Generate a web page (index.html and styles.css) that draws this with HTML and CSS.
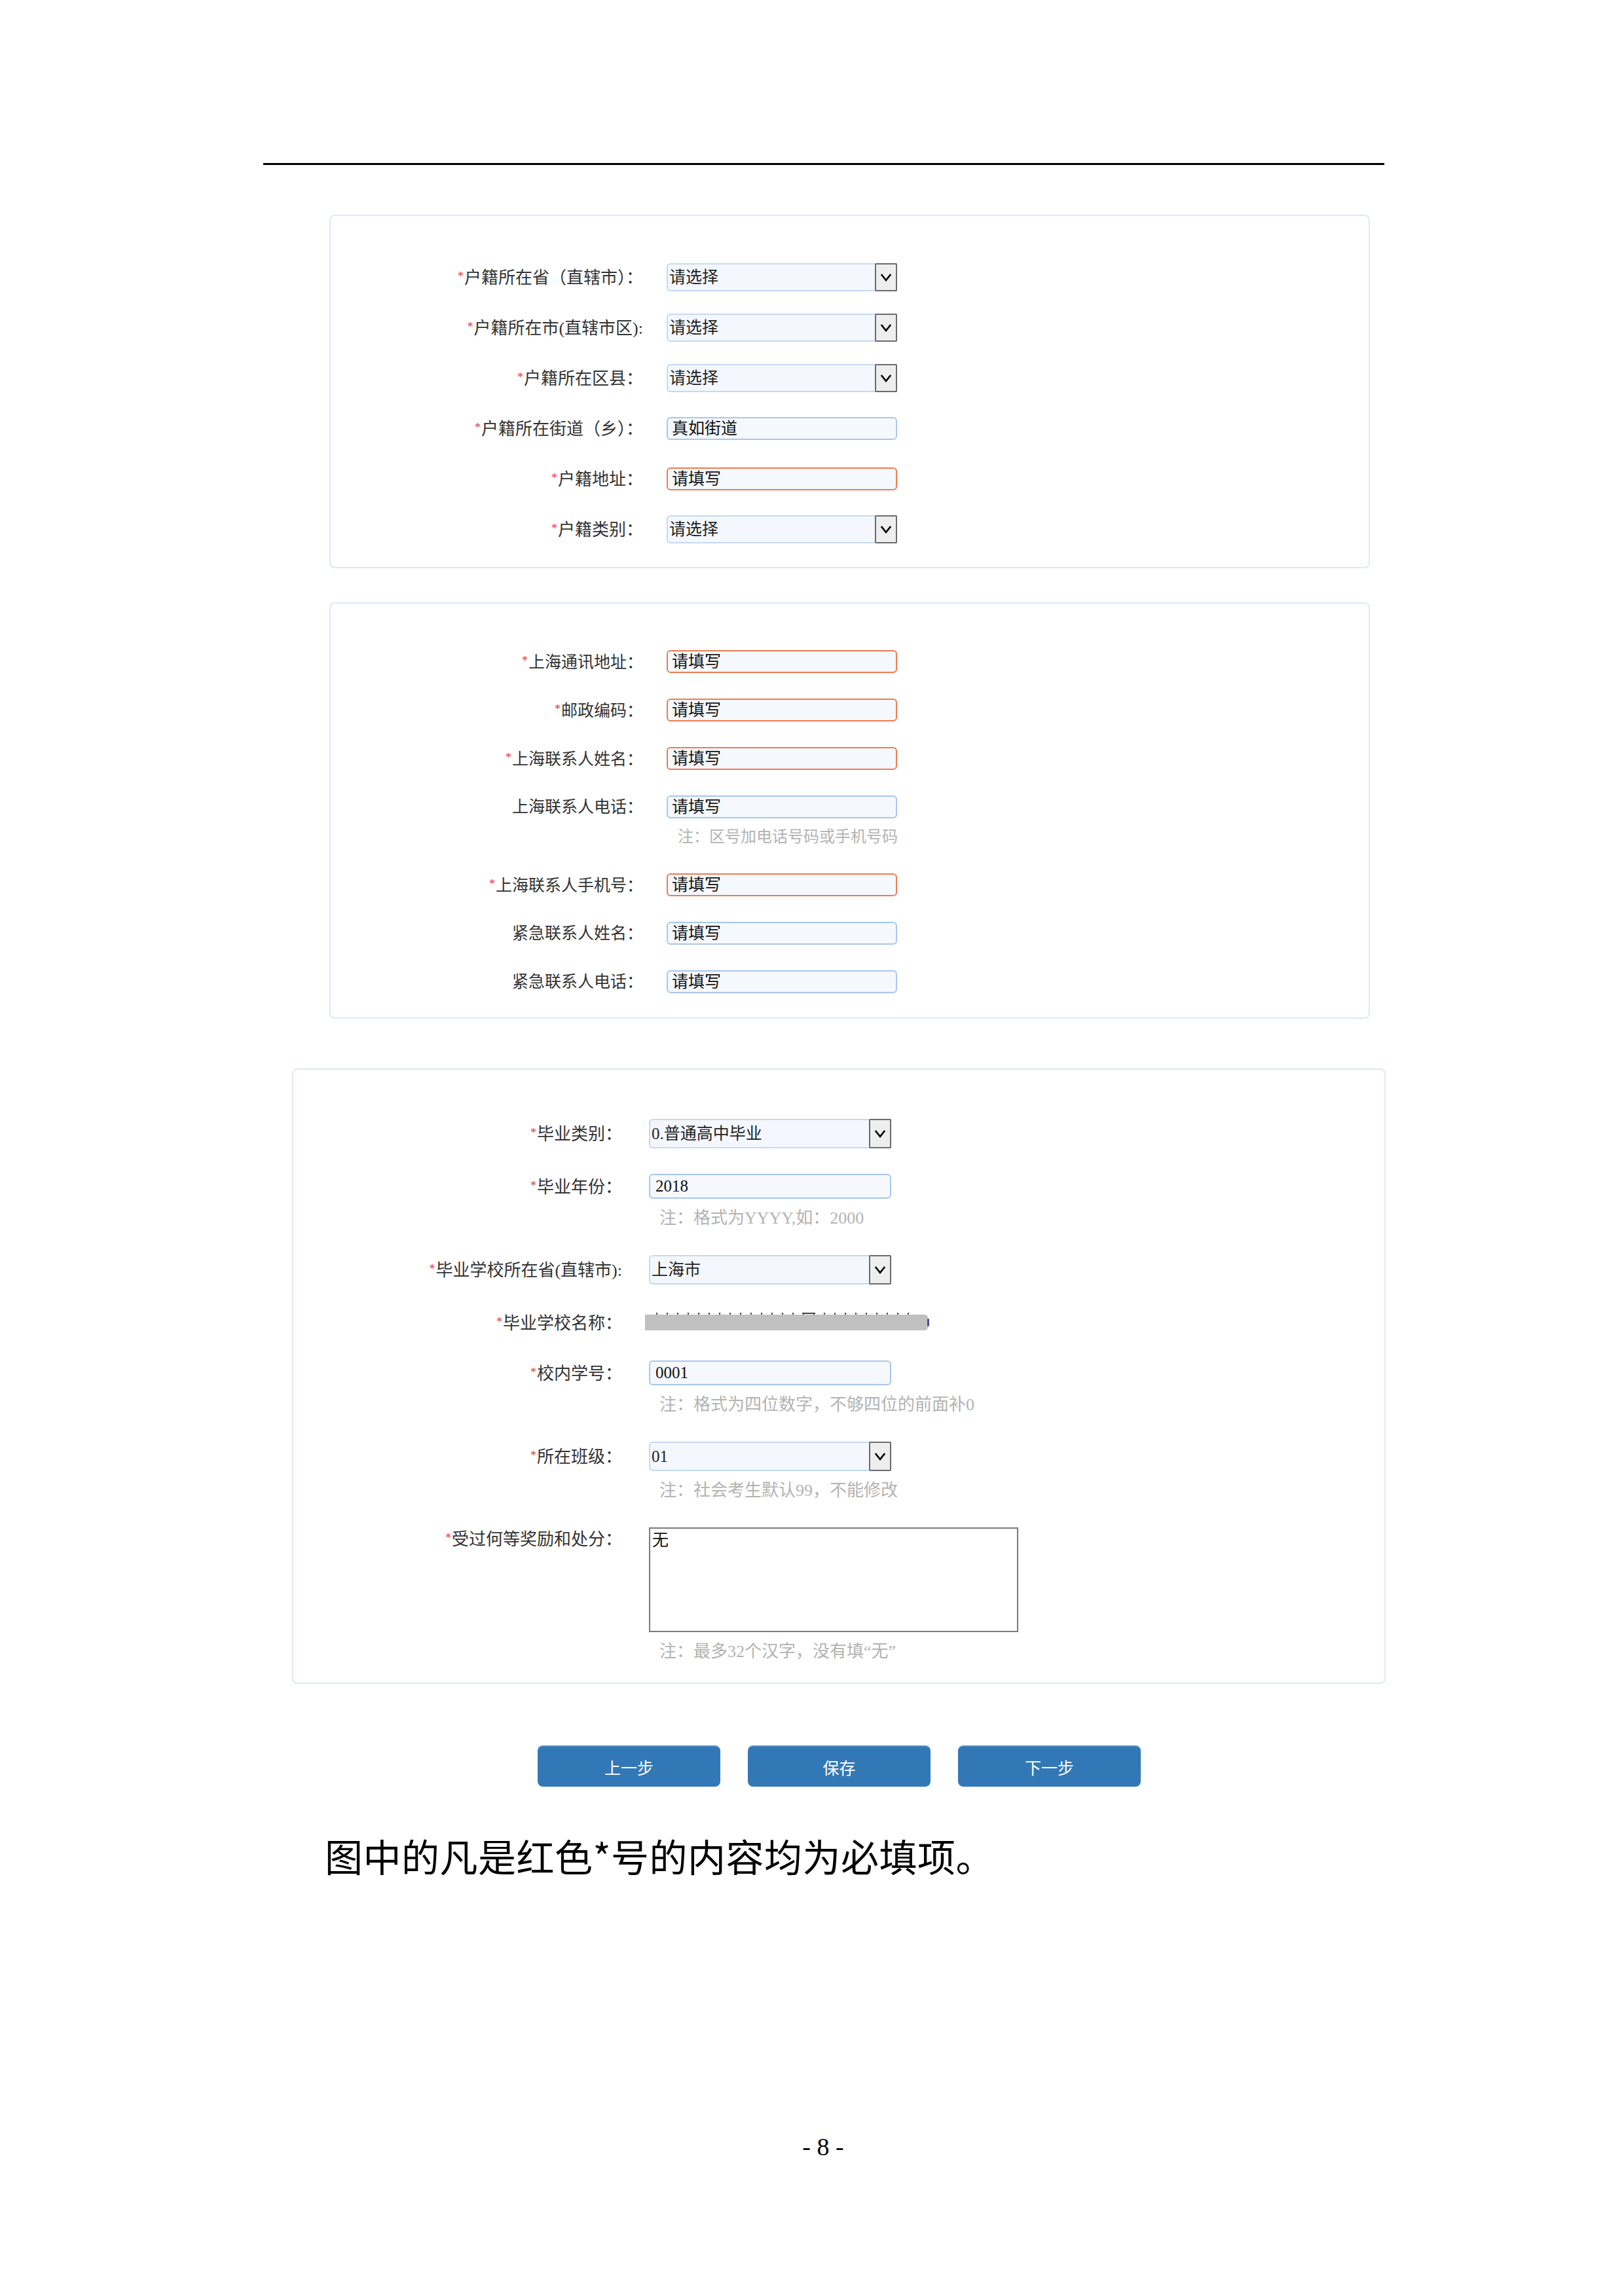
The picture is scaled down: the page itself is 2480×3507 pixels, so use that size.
FILE: index.html
```html
<!DOCTYPE html>
<html lang="zh-CN">
<head>
<meta charset="utf-8">
<title>报名信息</title>
<link rel="stylesheet" href="styles.css">
</head>
<body>
<div class="page">
  <div class="rule"></div>

  <section class="card card-a">
    <div class="row">
      <label class="lbl"><span class="req">*</span>户籍所在省（直辖市）：</label>
      <div class="sel"><span class="val">请选择</span><span class="arrow"><svg viewBox="0 0 20 14" width="18" height="13"><polyline points="2,2 10,12 18,2" fill="none" stroke="#000" stroke-width="3"/></svg></span></div>
    </div>
    <div class="row">
      <label class="lbl"><span class="req">*</span>户籍所在市(直辖市区):</label>
      <div class="sel"><span class="val">请选择</span><span class="arrow"><svg viewBox="0 0 20 14" width="18" height="13"><polyline points="2,2 10,12 18,2" fill="none" stroke="#000" stroke-width="3"/></svg></span></div>
    </div>
    <div class="row">
      <label class="lbl"><span class="req">*</span>户籍所在区县：</label>
      <div class="sel"><span class="val">请选择</span><span class="arrow"><svg viewBox="0 0 20 14" width="18" height="13"><polyline points="2,2 10,12 18,2" fill="none" stroke="#000" stroke-width="3"/></svg></span></div>
    </div>
    <div class="row">
      <label class="lbl"><span class="req">*</span>户籍所在街道（乡）：</label>
      <div class="inp">真如街道</div>
    </div>
    <div class="row">
      <label class="lbl"><span class="req">*</span>户籍地址：</label>
      <div class="inp err">请填写</div>
    </div>
    <div class="row">
      <label class="lbl"><span class="req">*</span>户籍类别：</label>
      <div class="sel"><span class="val">请选择</span><span class="arrow"><svg viewBox="0 0 20 14" width="18" height="13"><polyline points="2,2 10,12 18,2" fill="none" stroke="#000" stroke-width="3"/></svg></span></div>
    </div>
  </section>

  <section class="card card-b">
    <div class="row">
      <label class="lbl"><span class="req">*</span>上海通讯地址：</label>
      <div class="inp err">请填写</div>
    </div>
    <div class="row">
      <label class="lbl"><span class="req">*</span>邮政编码：</label>
      <div class="inp err">请填写</div>
    </div>
    <div class="row">
      <label class="lbl"><span class="req">*</span>上海联系人姓名：</label>
      <div class="inp err">请填写</div>
    </div>
    <div class="row">
      <label class="lbl">上海联系人电话：</label>
      <div class="inp">请填写</div>
      <p class="note">注：区号加电话号码或手机号码</p>
    </div>
    <div class="row">
      <label class="lbl"><span class="req">*</span>上海联系人手机号：</label>
      <div class="inp err">请填写</div>
    </div>
    <div class="row">
      <label class="lbl">紧急联系人姓名：</label>
      <div class="inp">请填写</div>
    </div>
    <div class="row">
      <label class="lbl">紧急联系人电话：</label>
      <div class="inp">请填写</div>
    </div>
  </section>

  <section class="card card-c">
    <div class="row">
      <label class="lbl"><span class="req">*</span>毕业类别：</label>
      <div class="sel"><span class="val">0.普通高中毕业</span><span class="arrow"><svg viewBox="0 0 20 14" width="18" height="13"><polyline points="2,2 10,12 18,2" fill="none" stroke="#000" stroke-width="3"/></svg></span></div>
    </div>
    <div class="row">
      <label class="lbl"><span class="req">*</span>毕业年份：</label>
      <div class="inp">2018</div>
      <p class="note">注：格式为YYYY,如：2000</p>
    </div>
    <div class="row">
      <label class="lbl"><span class="req">*</span>毕业学校所在省(直辖市):</label>
      <div class="sel"><span class="val">上海市</span><span class="arrow"><svg viewBox="0 0 20 14" width="18" height="13"><polyline points="2,2 10,12 18,2" fill="none" stroke="#000" stroke-width="3"/></svg></span></div>
    </div>
    <div class="row">
      <label class="lbl"><span class="req">*</span>毕业学校名称：</label>
      <div class="blur-box"><div class="blur"><span class="blur-mark"></span></div></div>
    </div>
    <div class="row">
      <label class="lbl"><span class="req">*</span>校内学号：</label>
      <div class="inp">0001</div>
      <p class="note">注：格式为四位数字，不够四位的前面补0</p>
    </div>
    <div class="row">
      <label class="lbl"><span class="req">*</span>所在班级：</label>
      <div class="sel"><span class="val">01</span><span class="arrow"><svg viewBox="0 0 20 14" width="18" height="13"><polyline points="2,2 10,12 18,2" fill="none" stroke="#000" stroke-width="3"/></svg></span></div>
      <p class="note">注：社会考生默认99，不能修改</p>
    </div>
    <div class="row row-top">
      <label class="lbl"><span class="req">*</span>受过何等奖励和处分：</label>
      <div class="area">无</div>
      <p class="note">注：最多32个汉字，没有填“无”</p>
    </div>
  </section>

  <div class="actions">
    <button class="btn">上一步</button>
    <button class="btn">保存</button>
    <button class="btn">下一步</button>
  </div>

  <p class="remark">图中的凡是红色*号的内容均为必填项。</p>

  <div class="pageno">- 8 -</div>
</div>
</body>
</html>
```

FILE: styles.css
```css
html, body {
  margin: 0;
  padding: 0;
  background: #ffffff;
}

body {
  width: 2480px;
  min-height: 3507px;
  font-family: "Liberation Serif", "Noto Sans CJK SC", sans-serif;
  color: #222;
}

.page {
  padding-top: 249px;
}

.rule {
  margin-left: 402px;
  width: 1712px;
  height: 3px;
  background: #000;
}

.card {
  box-sizing: border-box;
  border: 2px solid #dde9f6;
  border-radius: 8px;
  background: #fff;
  display: flex;
  flex-direction: column;
}

.card-a {
  margin-top: 76px;
  margin-left: 503px;
  width: 1589px;
  padding: 72px 0 36px;
  gap: 34px;
}

.card-b {
  margin-top: 52px;
  margin-left: 503px;
  width: 1589px;
  padding: 71px 0 37px;
  gap: 39px;
}

.card-c {
  margin-top: 76px;
  margin-left: 446px;
  width: 1670px;
  padding: 75px 0 30px;
  gap: 39px;
}

.row {
  display: grid;
  grid-template-columns: 477px 352px;
  column-gap: 36px;
  align-items: center;
  min-height: 43px;
}

.card-b .row {
  min-height: 35px;
}

.card-c .row {
  grid-template-columns: 502px 370px;
  column-gap: 41px;
  min-height: 38px;
}

.lbl {
  grid-column: 1;
  grid-row: 1;
  text-align: right;
  font-size: 26px;
  line-height: 32px;
  color: #333;
  white-space: nowrap;
}

.card-b .lbl {
  font-size: 25px;
}

.req {
  color: #e8323a;
  font-size: 18px;
  vertical-align: 5px;
  margin-right: 1px;
}

.sel {
  grid-column: 2;
  grid-row: 1;
  box-sizing: border-box;
  height: 43px;
  border: 2px solid #c5d9f1;
  border-right: none;
  border-radius: 6px 0 0 6px;
  background: #f4f8fe;
  display: flex;
  align-items: center;
  justify-content: space-between;
  font-size: 25px;
  color: #222;
}

.card-c .sel {
  height: 45px;
}

.sel .val {
  padding-left: 2px;
  line-height: 1;
}

.arrow {
  box-sizing: border-box;
  width: 34px;
  height: calc(100% + 4px);
  margin-top: -2px;
  margin-bottom: -2px;
  border: 2px solid #6b6b6b;
  border-radius: 2px;
  background: #eeeeee;
  display: flex;
  align-items: center;
  justify-content: center;
}

.inp {
  grid-column: 2;
  grid-row: 1;
  box-sizing: border-box;
  height: 35px;
  border: 2px solid #a9c7ee;
  border-radius: 6px;
  background: #f5f8fd;
  font-size: 25px;
  line-height: 31px;
  padding-left: 6px;
  color: #111;
}

.card-c .inp {
  height: 38px;
  line-height: 34px;
  padding-left: 8px;
}

.inp.err {
  border-color: #f07c52;
}

.note {
  grid-column: 2 / span 1;
  grid-row: 2;
  margin: 17px 0 4px 16px;
  font-size: 26px;
  line-height: 26px;
  color: #b3b3b3;
  white-space: nowrap;
}

.card-b .note {
  margin: 15px 0 4px 17px;
  font-size: 24px;
}

.blur-box {
  grid-column: 2;
  grid-row: 1;
  height: 38px;
  display: flex;
  align-items: center;
  margin-left: -6px;
}

.blur {
  flex: 0 0 auto;
  position: relative;
  width: 432px;
  height: 24px;
  background-color: #c0c0c0;
  border-radius: 0 5px 5px 0;
}

.blur::before {
  content: "";
  position: absolute;
  left: 10px;
  right: 20px;
  top: -3px;
  height: 3px;
  background-image: radial-gradient(circle, #555 0 1.2px, transparent 1.6px);
  background-size: 16px 3px;
}

.blur-mark {
  position: absolute;
  left: 240px;
  top: -3px;
  width: 20px;
  height: 2px;
  background: #444;
}

.blur::after {
  content: "";
  position: absolute;
  right: -2px;
  top: 6px;
  width: 3px;
  height: 12px;
  border-radius: 2px;
  background: #4a4a9a;
}

.row-top {
  align-items: start;
}

.row-top .lbl {
  margin-top: 0;
}

.area {
  grid-column: 2;
  grid-row: 1;
  box-sizing: border-box;
  width: 564px;
  height: 160px;
  border: 2px solid #7a7a7a;
  background: #fff;
  font-size: 25px;
  line-height: 30px;
  padding: 3px 0 0 3px;
  color: #111;
}

.actions {
  margin-top: 94px;
  margin-left: 821px;
  display: flex;
  gap: 42px;
}

.btn {
  width: 279px;
  height: 63px;
  border: none;
  border-top: 2px solid #5a93c8;
  border-radius: 8px;
  background: #3378b6;
  color: #fff;
  font-family: "Noto Sans CJK SC", sans-serif;
  font-size: 25px;
  padding: 0;
}

.remark {
  margin: 71px 0 0 496px;
  font-family: "Noto Sans CJK SC", sans-serif;
  font-size: 58px;
  line-height: 68px;
  letter-spacing: 0.5px;
  color: #000;
}

.pageno {
  margin-top: 389px;
  width: 2480px;
  box-sizing: border-box;
  padding-left: 34px;
  text-align: center;
  font-family: "Liberation Serif", serif;
  font-size: 38px;
  line-height: 44px;
  color: #000;
}
```
